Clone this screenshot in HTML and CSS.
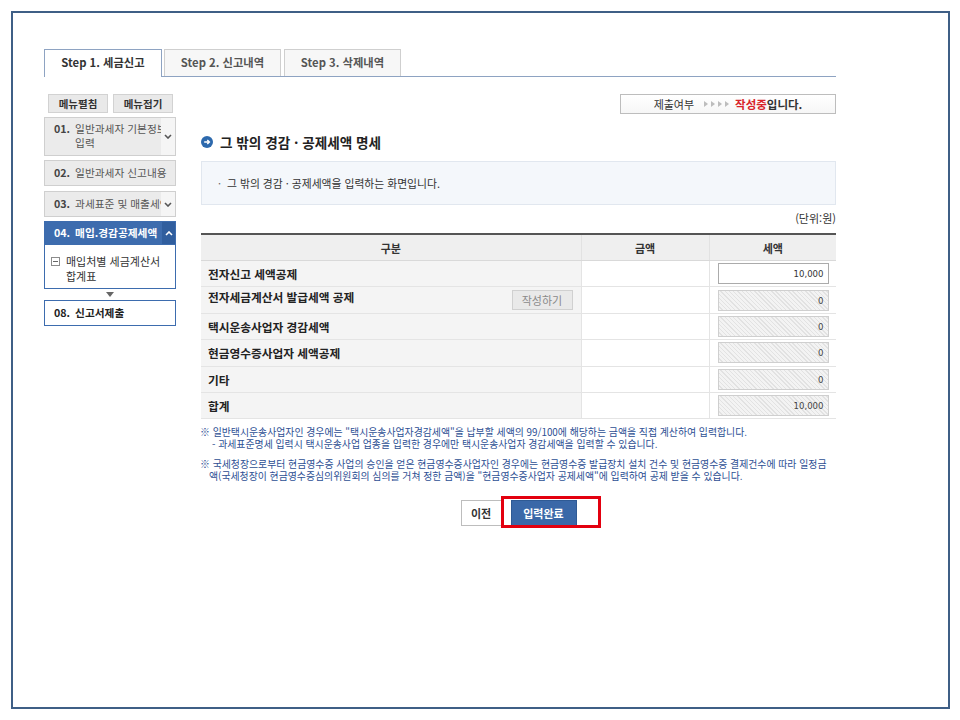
FILE: index.html
```html
<!DOCTYPE html>
<html lang="ko">
<head>
<meta charset="utf-8">
<title>그 밖의 경감 · 공제세액 명세</title>
<link rel="stylesheet" href="styles.css">
</head>
<body>
<div class="frame">
  <div class="page">
    <div class="tabs">
      <div class="tab active">Step 1. 세금신고</div>
      <div class="tab">Step 2. 신고내역</div>
      <div class="tab">Step 3. 삭제내역</div>
    </div>
    <div class="body">
      <aside class="side">
        <div class="side-btns">
          <button class="sbtn">메뉴펼침</button>
          <button class="sbtn">메뉴접기</button>
        </div>
        <div class="menu menu-tall m01">
          <div class="menu-text"><b class="num">01.</b><span class="lbl">일반과세자 기본정보<br>입력</span></div>
          <span class="chev"><svg width="8" height="5" viewBox="0 0 8 5"><polyline points="1,1 4,4 7,1" fill="none" stroke="#555" stroke-width="1.6"/></svg></span>
        </div>
        <div class="menu m02">
          <div class="menu-text"><b class="num">02.</b><span class="lbl">일반과세자 신고내용</span></div>
        </div>
        <div class="menu m03">
          <div class="menu-text"><b class="num">03.</b><span class="lbl">과세표준 및 매출세액</span></div>
          <span class="chev"><svg width="8" height="5" viewBox="0 0 8 5"><polyline points="1,1 4,4 7,1" fill="none" stroke="#555" stroke-width="1.6"/></svg></span>
        </div>
        <div class="menu menu-active m04">
          <div class="menu-text"><b class="num">04.</b><b class="lbl">매입.경감공제세액</b></div>
          <span class="chev"><svg width="8" height="5" viewBox="0 0 8 5"><polyline points="1,4 4,1 7,4" fill="none" stroke="#fff" stroke-width="1.6"/></svg></span>
        </div>
        <div class="submenu">
          <span class="minus-box"><svg width="9" height="9" viewBox="0 0 9 9"><rect x="0.5" y="0.5" width="8" height="8" fill="#fff" stroke="#8c8c8c"/><line x1="2" y1="4.5" x2="7" y2="4.5" stroke="#666" stroke-width="1"/></svg></span>
          <span class="sub-lbl">매입처별 세금계산서<br>합계표</span>
        </div>
        <div class="side-arrow"><svg width="8" height="5" viewBox="0 0 8 5"><polygon points="0,0 8,0 4,5" fill="#666"/></svg></div>
        <div class="menu menu-open m08">
          <div class="menu-text"><b class="num">08.</b><b class="lbl">신고서제출</b></div>
        </div>
      </aside>

      <main class="main">
        <div class="status">
          <span class="st-label">제출여부</span>
          <span class="st-arrows">
            <svg width="25" height="6" viewBox="0 0 25 6"><polygon points="0,0 4,3 0,6" fill="#bdbdbd"/><polygon points="7,0 11,3 7,6" fill="#bdbdbd"/><polygon points="14,0 18,3 14,6" fill="#bdbdbd"/><polygon points="21,0 25,3 21,6" fill="#bdbdbd"/></svg>
          </span>
          <span class="st-value"><b class="red">작성중</b><b>입니다.</b></span>
        </div>

        <h2 class="title">
          <svg class="title-ico" width="12" height="12" viewBox="0 0 12 12"><circle cx="6" cy="6" r="6" fill="#2d69ad"/><path d="M3.2 6 H8.3 M6.3 3.9 L8.4 6 L6.3 8.1" fill="none" stroke="#fff" stroke-width="1.4"/></svg>
          <span>그 밖의 경감 · 공제세액 명세</span>
        </h2>

        <div class="info">
          <span class="dot">·</span><span>그 밖의 경감 · 공제세액을 입력하는 화면입니다.</span>
        </div>

        <div class="unit">(단위:원)</div>

        <table class="grid">
          <colgroup><col class="c1"><col class="c2"><col class="c3"></colgroup>
          <thead>
            <tr><th>구분</th><th>금액</th><th>세액</th></tr>
          </thead>
          <tbody>
            <tr><td class="lab">전자신고 세액공제</td><td></td><td class="val"><input class="amt" type="text" value="10,000"></td></tr>
            <tr><td class="lab"><div class="lab-row"><span class="lift">전자세금계산서 발급세액 공제</span><button class="write-btn">작성하기</button></div></td><td></td><td class="val"><input class="amt dis" type="text" value="0" readonly></td></tr>
            <tr><td class="lab">택시운송사업자 경감세액</td><td></td><td class="val"><input class="amt dis" type="text" value="0" readonly></td></tr>
            <tr><td class="lab">현금영수증사업자 세액공제</td><td></td><td class="val"><input class="amt dis" type="text" value="0" readonly></td></tr>
            <tr><td class="lab">기타</td><td></td><td class="val"><input class="amt dis" type="text" value="0" readonly></td></tr>
            <tr><td class="lab">합계</td><td></td><td class="val"><input class="amt dis" type="text" value="10,000" readonly></td></tr>
          </tbody>
        </table>

        <p class="note">
          <span class="line">※ 일반택시운송사업자인 경우에는 "택시운송사업자경감세액"을 납부할 세액의 99/100에 해당하는 금액을 직접 계산하여 입력합니다.</span>
          <span class="line ind2">- 과세표준명세 입력시 택시운송사업 업종을 입력한 경우에만 택시운송사업자 경감세액을 입력할 수 있습니다.</span>
        </p>
        <p class="note note2">
          <span class="line">※ 국세청장으로부터 현금영수증 사업의 승인을 얻은 현금영수증사업자인 경우에는 현금영수증 발급장치 설치 건수 및 현금영수증 결제건수에 따라 일정금</span>
          <span class="line ind">액(국세청장이 현금영수증심의위원회의 심의를 거쳐 정한 금액)을 "현금영수증사업자 공제세액"에 입력하여 공제 받을 수 있습니다.</span>
        </p>

        <div class="btns">
          <button class="btn btn-prev">이전</button>
          <span class="btn-wrap">
            <button class="btn btn-done">입력완료</button>
            <span class="highlight"></span>
          </span>
        </div>
      </main>
    </div>
  </div>
</div>
</body>
</html>
```

FILE: styles.css
```css
html, body {
  margin: 0;
  padding: 0;
  background: #ffffff;
}

body {
  font-family: "Noto Sans CJK KR", "Noto Sans", sans-serif;
  color: #333;
}

.frame {
  margin: 11px 0 0 11px;
  width: 935px;
  height: 694px;
  border: 2px solid #3f5f86;
  background: #fff;
}

.page {
  width: 792px;
  padding: 36px 0 0 31px;
}

/* tabs */
.tabs {
  display: flex;
  align-items: flex-start;
  height: 27px;
  border-bottom: 1px solid #8ea3c2;
}

.tab {
  box-sizing: border-box;
  height: 27px;
  margin-right: 2px;
  border: 1px solid #cfcfcf;
  border-bottom: none;
  background: #f7f7f7;
  color: #555;
  font-size: 11.3px;
  font-weight: bold;
  line-height: 25px;
  text-align: center;
}

.tab:nth-child(1) { width: 118px; }
.tab:nth-child(2) { width: 117px; }
.tab:nth-child(3) { width: 117px; margin-left: 1px; }

.tab.active {
  height: 28px;
  border-color: #8ea3c2;
  background: #fff;
  color: #333;
}

/* body layout */
.body {
  display: flex;
  margin-top: 17px;
}

.side {
  width: 132px;
  flex: none;
  display: flex;
  flex-direction: column;
}

.side-btns {
  display: flex;
  gap: 5px;
  padding-left: 4px;
  height: 19px;
}

.sbtn {
  box-sizing: border-box;
  width: 60px;
  height: 19px;
  padding: 0;
  border: 1px solid #d2d2d2;
  background: #e9e9e9;
  color: #333;
  font-family: inherit;
  font-size: 10.5px;
  font-weight: bold;
  line-height: 17px;
}

.menu {
  box-sizing: border-box;
  display: flex;
  height: 26px;
  border: 1px solid #cfcfcf;
  background: #ebebeb;
  color: #555;
  font-size: 10.7px;
  line-height: 14px;
}

.m01 { margin-top: 4px; height: 39px; }
.m02 { margin-top: 4px; }
.m03 { margin-top: 5px; }
.m04 { margin-top: 4px; height: 24px; }

.menu-text {
  flex: 1;
  min-width: 0;
  display: flex;
  align-items: center;
  padding-left: 9px;
  overflow: hidden;
  white-space: nowrap;
}

.menu-tall .menu-text {
  align-items: flex-start;
  padding-top: 4px;
}

.num {
  margin-right: 5px;
  color: #444;
}

.chev {
  width: 14px;
  flex: none;
  display: flex;
  align-items: center;
  justify-content: center;
  background: #f5f5f5;
}

.menu-active {
  border-color: #3d6cae;
  background: #3d6cae;
  color: #fff;
}

.menu-active .num { color: #fff; }

.menu-active .chev {
  width: 13px;
  background: #305e9e;
}

.submenu {
  box-sizing: border-box;
  height: 44px;
  display: flex;
  align-items: flex-start;
  padding: 9px 0 0 6px;
  border: 1px solid #3d6cae;
  border-top: none;
  background: #fff;
  font-size: 11px;
  line-height: 15px;
  color: #333;
}

.minus-box {
  display: flex;
  margin-top: 3px;
  margin-right: 6px;
}

.side-arrow {
  height: 11px;
  display: flex;
  align-items: center;
  justify-content: center;
}

.menu-open {
  border-color: #3d6cae;
  background: #fff;
  color: #333;
}

.menu-open .num,
.menu-open .lbl {
  color: #222;
}

/* main */
.main {
  width: 635px;
  margin-left: 25px;
}

.status {
  box-sizing: border-box;
  width: 216px;
  height: 20px;
  margin-left: auto;
  display: flex;
  align-items: center;
  justify-content: center;
  border: 1px solid #bdbdbd;
  background: linear-gradient(#ffffff, #f6f6f6);
  font-size: 11px;
  line-height: 18px;
  color: #333;
}

.st-arrows {
  display: flex;
  margin: 0 6px 0 10px;
}

.st-value {
  font-size: 11.5px;
}

.red { color: #d8232a; }

.title {
  display: flex;
  align-items: center;
  height: 16px;
  margin: 20px 0 0 0;
  font-size: 13.6px;
  font-weight: bold;
  line-height: 16px;
  color: #222;
}

.title-ico {
  margin-right: 7px;
}

.info {
  box-sizing: border-box;
  height: 44px;
  margin-top: 11px;
  display: flex;
  align-items: center;
  padding-left: 16px;
  border: 1px solid #e1e7ef;
  background: #f4f7fb;
  font-size: 10.8px;
  color: #333;
}

.dot {
  margin-right: 6px;
  color: #666;
}

.unit {
  margin-top: 7px;
  height: 12px;
  font-size: 11px;
  line-height: 12px;
  text-align: right;
  color: #333;
}

.grid {
  width: 635px;
  margin-top: 9px;
  border-collapse: collapse;
  table-layout: fixed;
  border-top: 2px solid #555;
}

.c1 { width: 380px; }
.c2 { width: 128px; }
.c3 { width: 127px; }

.grid th {
  height: 25px;
  padding: 0;
  background: #efefef;
  border-bottom: 1px solid #d9d9d9;
  border-left: 1px solid #e2e2e2;
  font-size: 11px;
  font-weight: bold;
  color: #333;
  text-align: center;
}

.grid td {
  height: 25.4px;
  padding: 0;
  border-bottom: 1px solid #e4e4e4;
  border-left: 1px solid #e4e4e4;
  background: #fff;
}

.grid th:first-child,
.grid td:first-child {
  border-left: none;
}

.grid td.lab {
  padding-left: 7px;
  background: #f4f4f4;
  font-size: 11.7px;
  font-weight: bold;
  color: #222;
}

.lab-row {
  display: flex;
  align-items: center;
  justify-content: space-between;
  padding-right: 8px;
}

.lift {
  position: relative;
  top: -4px;
}

.write-btn {
  box-sizing: border-box;
  width: 61px;
  height: 20px;
  padding: 0;
  border: 1px solid #d0d0d0;
  background: #e9e9e9;
  color: #8a8a8a;
  font-family: inherit;
  font-size: 11px;
  font-weight: normal;
  line-height: 18px;
}

.grid td.val {
  padding: 0 8px;
}

.amt {
  box-sizing: border-box;
  display: block;
  width: 111px;
  height: 21px;
  margin: 0;
  padding: 0 4px 0 0;
  border: 1px solid #ababab;
  background: #fff;
  font-family: "DejaVu Sans Condensed", "Noto Sans", sans-serif;
  font-size: 9.5px;
  color: #333;
  text-align: right;
}

.amt.dis {
  border-color: #cfcfcf;
  background: repeating-linear-gradient(45deg, #f3f3f3 0, #f3f3f3 2px, #e2e2e2 2px, #e2e2e2 3px);
  color: #444;
}

.note {
  margin: 7px 0 0 -1px;
  font-size: 9.9px;
  line-height: 12px;
  color: #2d4f94;
  white-space: nowrap;
}

.note2 {
  margin-top: 8px;
}

.note .line {
  display: block;
}

.note .ind2 { padding-left: 12px; }
.note .ind { padding-left: 9px; }

.btns {
  display: flex;
  justify-content: center;
  gap: 9px;
  margin-top: 18px;
}

.btn {
  box-sizing: border-box;
  height: 26px;
  padding: 0;
  font-family: inherit;
  font-size: 11px;
  font-weight: bold;
  line-height: 24px;
}

.btn-prev {
  width: 41px;
  border: 1px solid #bdbdbd;
  background: #fff;
  color: #333;
}

.btn-wrap {
  position: relative;
  display: flex;
}

.btn-done {
  width: 66px;
  border: 1px solid #2f5a94;
  background: #3a68a8;
  color: #fff;
}

.highlight {
  position: absolute;
  left: -10px;
  top: -4px;
  width: 100px;
  height: 32px;
  box-sizing: border-box;
  border: 3px solid #e3000f;
}
```
